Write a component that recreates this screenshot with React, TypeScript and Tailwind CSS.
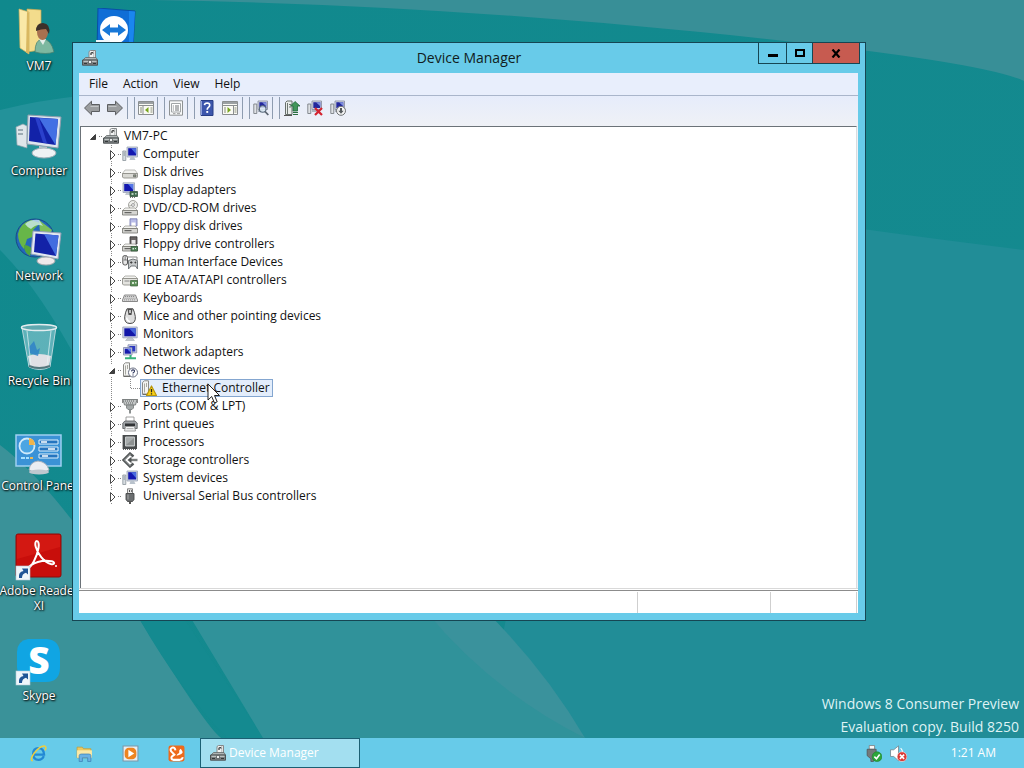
import type { ReactNode } from 'react';

type IconProps = { size?: number };

function Icon({ size = 16, children }: { size?: number; children: ReactNode }) {
  return (
    <svg width={size} height={size} viewBox="0 0 16 16" className="shrink-0" aria-hidden="true">
      {children}
    </svg>
  );
}

/* ---------- device icons ---------- */

function DeviceManagerIcon({ size }: IconProps) {
  return (
    <Icon size={size}>
      <path d="M7 8.500V1.500L8.500.5h5V8.500z" fill="#f1f2f2" stroke="#85898a" />
      <path d="M11.800 1v7" stroke="#b4b8b8" />
      <path d="M9 5V3.200q1.500-1.500 2.200.3" fill="none" stroke="#2e3131" strokeWidth="1.200" />
      <path d="M1 10 3.500 7.500H14l1.500 2.500z" fill="#aeb3b3" stroke="#63696a" strokeWidth=".8" />
      <path d="M.5 10h15v5.200H.5z" fill="#7b8081" stroke="#4d5354" />
      <path d="M1.500 11.300h13" stroke="#cdd1d1" />
      <path d="M2 13.500h3M11 13.500h3" stroke="#34383a" />
      <path d="M6.500 10.500h3v3h-3z" fill="#eceeee" stroke="#4b5051" strokeWidth=".7" />
    </Icon>
  );
}

function ComputerIcon() {
  return (
    <Icon>
      <path d="M.8 5h3v9.500h-3z" fill="#d7dde2" stroke="#8a939b" strokeWidth=".8" />
      <path d="M1.500 7h1.500M1.500 9h1.500" stroke="#5b6b79" strokeWidth=".7" />
      <path d="M5 1h10.500v10H5z" fill="#cfd6e2" stroke="#9aa3b5" strokeWidth=".8" />
      <path d="M6.200 2.200h8v7.300h-8z" fill="#1418b0" />
      <path d="M9 2.200h5.200v6z" fill="#4a6de0" />
      <path d="M8.500 11h3.500l1.500 3h-6z" fill="#b9c2cc" />
    </Icon>
  );
}

function DiskIcon() {
  return (
    <Icon>
      <path d="M3 6h10l2.500 3.500H.5z" fill="#f2f2ef" stroke="#a5a5a0" strokeWidth=".7" />
      <path d="M.5 9.500h15V13l-1 1h-13l-1-1z" fill="#d9d9d4" stroke="#85857f" strokeWidth=".8" />
      <path d="M11.500 10.800h2.500v2h-2.500z" fill="#8f9a86" stroke="#555" strokeWidth=".6" />
    </Icon>
  );
}

function DisplayIcon() {
  return (
    <Icon>
      <path d="M1 .8h11.500v9.700H1z" fill="#cfd6e2" stroke="#9aa3b5" strokeWidth=".8" />
      <path d="M2.200 2h9v7.200h-9z" fill="#1418b0" />
      <path d="M6 2h5.200v6z" fill="#5577e6" />
      <path d="M4 11h5v2H3z" fill="#c1c8d0" />
      <path d="M8 9.500h7.500v5H8z" fill="#3f6b4d" stroke="#2c4735" strokeWidth=".7" />
      <path d="M9.500 11h2v2h-2zM13 11h1.500v1.500H13z" fill="#b8cdbd" />
      <path d="M8 15.500h6" stroke="#777" strokeDasharray="1 1" />
    </Icon>
  );
}

function DriveBase() {
  return (
    <>
      <path d="M3 8h10l2.500 2.500H.5z" fill="#f3f3f0" stroke="#96968f" strokeWidth=".7" />
      <path d="M.5 10.500h15V15H.5z" fill="#d6d6d2" stroke="#75756f" strokeWidth=".8" />
      <path d="M2.500 12.700h7" stroke="#4c4c49" />
    </>
  );
}

function DvdIcon() {
  return (
    <Icon>
      <circle cx="11" cy="5" r="4.500" fill="#eeefec" stroke="#8e8e89" strokeWidth=".8" />
      <path d="m11 5 2.500-4M11 5 7 6" stroke="#b9b9b0" />
      <circle cx="11" cy="5" r="1.400" fill="#fff" stroke="#777" strokeWidth=".7" />
      <DriveBase />
    </Icon>
  );
}

function FloppyIcon() {
  return (
    <Icon>
      <path d="M8 .8h7V8H8z" fill="#b9bde8" stroke="#6f74a8" strokeWidth=".8" />
      <path d="M9.500 4.500h4V8h-4z" fill="#fff" />
      <DriveBase />
    </Icon>
  );
}

function FloppyControllerIcon() {
  return (
    <Icon>
      <path d="M8 .8h7V8H8z" fill="#6a6565" stroke="#333" strokeWidth=".8" />
      <path d="M9.500 4h4v4h-4z" fill="#e9e9e9" />
      <DriveBase />
      <path d="M9 10.500h6.500V15H9z" fill="#4f8257" stroke="#315437" strokeWidth=".7" />
      <path d="M10.500 12h1.500v1.500h-1.500zM13 12h1v1h-1z" fill="#dbe8dc" />
    </Icon>
  );
}

function HidIcon() {
  return (
    <Icon>
      <rect x=".8" y="1.500" width="4.700" height="9.500" rx="2" fill="#e6e6e6" stroke="#555" />
      <path d="M3.200 2v4M1.500 6h3.500" stroke="#666" strokeWidth=".8" />
      <path d="M6 3h9v3" fill="none" stroke="#8b8b8b" />
      <path d="M6.500 6.500Q11 3.500 15.500 6.500v8.500L13.500 12H9L6.500 15z" fill="#c6c9ca" stroke="#686d70" strokeWidth=".9" />
      <path d="M8 8.500h2.500M9.250 7.200v2.600M12.500 8.500h1.800M13.400 7.500v2" stroke="#333" strokeWidth=".8" />
    </Icon>
  );
}

function IdeIcon() {
  return (
    <Icon>
      <path d="M3 4h10l2.500 2.500H.5z" fill="#f3f3f0" stroke="#96968f" strokeWidth=".7" />
      <path d="M.5 6.500h15V12l-1 1h-13l-1-1z" fill="#e3e3df" stroke="#85857f" strokeWidth=".8" />
      <path d="M2.500 9h5" stroke="#888" />
      <path d="M8.500 8.500h7V14h-7z" fill="#5a8f57" stroke="#3c6139" strokeWidth=".7" />
      <path d="M10 10h2v2h-2zM13 10h1.500v1.500H13z" fill="#d7e6d3" />
    </Icon>
  );
}

function KeyboardIcon() {
  return (
    <Icon>
      <path d="M2.500 5h11l2 5v1.500H.5V10z" fill="#dcdcdc" stroke="#7e7e7e" strokeWidth=".9" />
      <path d="M3 6.500h10M2.500 8.200h11M2 9.900h12" stroke="#8d8d8d" strokeDasharray="1.200 .8" />
    </Icon>
  );
}

function MouseIcon() {
  return (
    <Icon>
      <path d="M5 .8h6q1.500 3 2.300 7.700Q14 15.500 8 15.500T2.700 8.500Q3.500 3.800 5 .8z" fill="#dedede" stroke="#4a4a4a" />
      <path d="M5.500.8 6.500 7h3L10.500.8z" fill="#4f4f4f" />
      <path d="M7.300 2h1.400v3H7.300z" fill="#f3f3f3" />
      <path d="M4.500 9.500q1 4 3.500 4" fill="none" stroke="#fff" strokeWidth="1.500" />
    </Icon>
  );
}

function MonitorIcon() {
  return (
    <Icon>
      <path d="M.8 1h14.400v10.800H.8z" fill="#d3d8e6" stroke="#959db5" strokeWidth=".8" />
      <path d="M2.300 2.300h11.400v8H2.300z" fill="#1216a8" />
      <path d="M7 2.300h6.700v7z" fill="#4566db" />
      <path d="M6 11.800h4l2.500 2.700h-9z" fill="#c2c8d0" stroke="#9da5ae" strokeWidth=".5" />
    </Icon>
  );
}

function NetworkAdapterIcon() {
  return (
    <Icon>
      <path d="M6 .8h8.700v8H6z" fill="#d3d8e6" stroke="#7d86a8" strokeWidth=".8" />
      <path d="M7.300 2h6v5.500h-6z" fill="#2b38c0" />
      <path d="M1.500 3.500H10v7.500H1.500z" fill="#d3d8e6" stroke="#7d86a8" strokeWidth=".8" />
      <path d="M2.700 4.700h6.200v5H2.700z" fill="#171bad" />
      <path d="m5 4.700 3.900 4v-4z" fill="#5e7ef0" />
      <path d="M8.500 11v3M3 14.300h11" stroke="#37b27b" strokeWidth="2" fill="none" />
    </Icon>
  );
}

function TowerShape() {
  return (
    <>
      <path d="m1.500 2.500 2-1.700h4V14h-6z" fill="#f4f4f2" stroke="#8a8a86" />
      <path d="M3.500 3.500v9M5.500 3v4" stroke="#a8a8a0" />
      <path d="M1.500 14.500h7" stroke="#6b6b68" />
    </>
  );
}

function OtherDeviceIcon() {
  return (
    <Icon>
      <TowerShape />
      <circle cx="11" cy="10.500" r="4.500" fill="#fff" stroke="#666c80" />
      <path d="M9.500 9.400q.2-1.600 1.600-1.500 1.500.1 1.400 1.300-.1.800-.9 1.200-.6.300-.6 1" fill="none" stroke="#30385f" strokeWidth="1.100" />
      <path d="M10.400 12.400h1.200v1.100h-1.200z" fill="#30385f" />
    </Icon>
  );
}

function WarningDeviceIcon() {
  return (
    <Icon>
      <TowerShape />
      <path d="m10.500 6 5 9.500h-10z" fill="#f8cf16" stroke="#b8960d" strokeWidth="1.200" strokeLinejoin="round" />
      <path d="M10.500 9v3.200M10.500 13.200v1.200" stroke="#222" strokeWidth="1.300" />
    </Icon>
  );
}

function PortIcon() {
  return (
    <Icon>
      <path d="M1 1.500h14L13.500 7h-11z" fill="#c3c6c6" stroke="#7c8181" />
      <path d="M3 3h10M4 5h8" stroke="#5c6060" strokeDasharray="1 1" />
      <path d="M4.500 7h7v3L10 11.500H6L4.500 10z" fill="#a4a9a9" stroke="#747979" strokeWidth=".8" />
      <path d="M7 11.500h2v4H7z" fill="#8b9090" />
      <path d="M.5 1v4M15.500 1v4" stroke="#888" />
    </Icon>
  );
}

function PrinterIcon() {
  return (
    <Icon>
      <path d="M4 1h8v5H4z" fill="#fff" stroke="#8b8b8b" strokeWidth=".8" />
      <path d="M.8 7 3 5h10l2.200 2v5.500H.8z" fill="#a0a4a7" stroke="#55595c" strokeWidth=".8" />
      <path d="M3 7.500h10V10H3z" fill="#303335" />
      <path d="M3.500 10.500h9l1 4.500h-11z" fill="#f3f5f5" stroke="#888" strokeWidth=".8" />
      <path d="M4.500 12.700h7" stroke="#aaa" />
    </Icon>
  );
}

function ProcessorIcon() {
  return (
    <Icon>
      <path d="M1 1h14v14H1z" fill="#484b4c" />
      <path d="M.5 1.500v14M1 15.500h14" stroke="#666" strokeDasharray="1 1" />
      <path d="M3.500 3h9v9h-9z" fill="#a8acac" stroke="#c6caca" />
      <path d="m4 11 8-7v7z" fill="#8e9292" />
    </Icon>
  );
}

function StorageIcon() {
  return (
    <Icon>
      <path d="M11.500 4.500 8 1.500 1.500 8 8 14.500l3.500-3" fill="none" stroke="#55595a" strokeWidth="2.400" />
      <path d="m8.500 2-6 6 6 6" fill="none" stroke="#b4b8b8" strokeWidth=".8" />
      <path d="M8 8h7.500" stroke="#7a7e7e" strokeWidth="2.400" />
      <path d="m5.500 8 4-3.300v6.600z" fill="#4f5353" />
    </Icon>
  );
}

function UsbIcon() {
  return (
    <Icon>
      <path d="M5.500.8h5v4.700h-5z" fill="#e6e6e6" stroke="#777" strokeWidth=".9" />
      <path d="M7 2h1v2H7zM9 2h.8v2H9z" fill="#555" />
      <path d="M4 5.500h8v6L10.500 13.500h-5L4 11.500z" fill="#6b6e70" stroke="#47494a" strokeWidth=".9" />
      <path d="M6 6.500v5" stroke="#aaa" />
      <path d="M8 13.500V16" stroke="#555" strokeWidth="2" />
    </Icon>
  );
}

/* ---------- toolbar icons ---------- */

function ArrowIcon({ flip = false }: { flip?: boolean }) {
  return (
    <Icon>
      <path
        d={flip ? 'M15.500 8 8.500 1.200V4.500H.5v7h8v3.300z' : 'M.5 8 7.500 1.200V4.500h8v7h-8v3.300z'}
        fill="#9b9d9f"
        stroke="#5c5e61"
        strokeLinejoin="round"
      />
      <path d={flip ? 'M1.500 6.500h8' : 'M6.500 6.500h8'} stroke="#c4c6c8" />
    </Icon>
  );
}

function PaneIcon({ right = false }: { right?: boolean }) {
  return (
    <Icon>
      <path d="M.5 1.500h15v13H.5z" fill="#fafaf4" stroke="#8a8e90" />
      <path d="M1 2h14v2H1z" fill="#9ba0a3" />
      <path d="M1 5.500h14" stroke="#8a8e90" />
      <path d={right ? 'M11.500 6v8' : 'M5 6v8'} stroke="#8a8e90" />
      <path d="M2 8h2M2 10h2M2 12h2M12.500 8h2M12.500 10h2M12.500 12h2" stroke="#888d7a" />
      <path d={right ? 'M5.500 7v6L9 10z' : 'M10.500 7v6L7 10z'} fill="#78a51d" />
    </Icon>
  );
}

function PropertiesIcon() {
  return (
    <Icon>
      <path d="M1.500.8h13v14.400h-13z" fill="#f8f9f9" stroke="#8e9293" />
      <path d="M3.500 3.500h9v8.500h-9z" fill="#fff" stroke="#a1a5a6" />
      <path d="M4.800 6h1M7 6h4M4.800 8h1M7 8h4M4.800 10h1M7 10h4" stroke="#6c7172" />
      <path d="M5 13.700h2.500M9 13.700h3" stroke="#999" />
    </Icon>
  );
}

function HelpIcon() {
  return (
    <Icon>
      <path d="M2 .5h12v15H2z" fill="#3c56ac" stroke="#273d85" />
      <path d="M2.500 1v14" stroke="#8ea0db" />
      <path d="M5.500 5.200Q5.700 3 8.200 3q2.600.1 2.500 2.300 0 1.300-1.300 2.100Q8.200 8.200 8.200 9.700" fill="none" stroke="#fff" strokeWidth="1.700" />
      <path d="M7.300 11h1.900v1.900H7.300z" fill="#fff" />
    </Icon>
  );
}

function SmallComputer() {
  return (
    <>
      <path d="M.8 4h3v9.500h-3z" fill="#dfe2e5" stroke="#7b8086" strokeWidth=".9" />
      <path d="M5 1h9.500v8.500H5z" fill="#d5d9e6" stroke="#8d93a5" strokeWidth=".9" />
      <path d="M6.300 2.200h7v5.800h-7z" fill="#23279c" />
      <path d="m9 2.200 4.300 4V2.200z" fill="#7d8ede" />
      <path d="M5 11h5" stroke="#9aa0aa" strokeWidth="1.500" />
    </>
  );
}

function ScanIcon() {
  return (
    <Icon>
      <SmallComputer />
      <circle cx="9.700" cy="9" r="3.300" fill="#dceaf6" fillOpacity=".85" stroke="#596a7b" strokeWidth="1.100" />
      <path d="m12 11.500 3.300 3.500" stroke="#5b6570" strokeWidth="1.800" />
    </Icon>
  );
}

function UpdateDriverIcon() {
  return (
    <Icon>
      <path d="M1.500 2.500 3 1h5v13.500H1.500z" fill="#e9ecea" stroke="#68706b" />
      <path d="M3.500 3v11M5 4.500h2M5 7h2" stroke="#6d7670" />
      <path d="M11 1.500 6.500 6H9v5h4.500V6H16z" fill="#42965a" stroke="#22663a" strokeWidth=".8" />
      <path d="M9 12.500h5M9 14.500h5" stroke="#2a6d40" strokeWidth="1.200" />
      <path d="M0 15.500h8" stroke="#555" />
    </Icon>
  );
}

function UninstallIcon() {
  return (
    <Icon>
      <SmallComputer />
      <path d="m8 8 7 7M15 8l-7 7" stroke="#d3232f" strokeWidth="2.200" />
    </Icon>
  );
}

function DisableIcon() {
  return (
    <Icon>
      <SmallComputer />
      <circle cx="11" cy="10.800" r="4.500" fill="#f4f4f4" stroke="#6d7072" />
      <path d="M10 8h2v2.700h1.700L11 13.700l-2.700-3H10z" fill="#555a5d" />
    </Icon>
  );
}

/* ---------- tree ---------- */

function Connector({ open = false, root = false }: { open?: boolean; root?: boolean }) {
  return (
    <button type="button" aria-label={open ? 'Collapse' : 'Expand'} className="h-[18px] w-[19px] shrink-0">
      <svg width="19" height="18" viewBox="0 0 19 18" aria-hidden="true">
        {!root && <path d="M8.500 0v4M8.500 16v2" stroke="#8a8a8a" strokeDasharray="1 1" />}
        <path d="M15 9.500h3" stroke="#808080" strokeDasharray="1 1" />
        {open ? (
          <path d="M11.500 7.500v5h-5z" fill="#404040" stroke="#262626" strokeWidth=".8" />
        ) : (
          <path d="M7.500 5.500v9l4.500-4.500z" fill="#fff" stroke="#4a4a4a" />
        )}
      </svg>
    </button>
  );
}

const categories: { label: string; icon: ReactNode; child?: string }[] = [
  { label: 'Computer', icon: <ComputerIcon /> },
  { label: 'Disk drives', icon: <DiskIcon /> },
  { label: 'Display adapters', icon: <DisplayIcon /> },
  { label: 'DVD/CD-ROM drives', icon: <DvdIcon /> },
  { label: 'Floppy disk drives', icon: <FloppyIcon /> },
  { label: 'Floppy drive controllers', icon: <FloppyControllerIcon /> },
  { label: 'Human Interface Devices', icon: <HidIcon /> },
  { label: 'IDE ATA/ATAPI controllers', icon: <IdeIcon /> },
  { label: 'Keyboards', icon: <KeyboardIcon /> },
  { label: 'Mice and other pointing devices', icon: <MouseIcon /> },
  { label: 'Monitors', icon: <MonitorIcon /> },
  { label: 'Network adapters', icon: <NetworkAdapterIcon /> },
  { label: 'Other devices', icon: <OtherDeviceIcon />, child: 'Ethernet Controller' },
  { label: 'Ports (COM & LPT)', icon: <PortIcon /> },
  { label: 'Print queues', icon: <PrinterIcon /> },
  { label: 'Processors', icon: <ProcessorIcon /> },
  { label: 'Storage controllers', icon: <StorageIcon /> },
  { label: 'System devices', icon: <ComputerIcon /> },
  { label: 'Universal Serial Bus controllers', icon: <UsbIcon /> },
];

function DeviceTree() {
  return (
    <ul className="pl-[3px] text-[12px] leading-[18px] text-[#111]">
      <li>
        <div className="flex h-[18px] items-center">
          <Connector open root />
          <DeviceManagerIcon />
          <span className="pl-[5px]">VM7-PC</span>
        </div>
        <ul className="pl-[19px]">
          {categories.map((c) => (
            <li key={c.label}>
              <div className="flex h-[18px] items-center">
                <Connector open={Boolean(c.child)} />
                {c.icon}
                <span className="whitespace-nowrap pl-[5px]">{c.label}</span>
              </div>
              {c.child && (
                <div className="flex h-[18px] items-center">
                  <svg width="37" height="18" viewBox="0 0 37 18" className="shrink-0" aria-hidden="true">
                    <path d="M8.500 0v18M27.500 0v9.500H37" fill="none" stroke="#8a8a8a" strokeDasharray="1 1" />
                  </svg>
                  <div className="relative flex h-[18px] items-center border border-[#84a6d0] bg-[#e3edfb] pr-[2px]">
                    <WarningDeviceIcon />
                    <span className="whitespace-nowrap pl-[5px]">{c.child}</span>
                    {/* mouse pointer */}
                    <svg width="14" height="22" viewBox="0 0 14 22" className="absolute left-[66px] top-[3px]" aria-hidden="true">
                      <path d="M1 1v16l3.700-3.500 2.800 6.500 2.700-1.200-2.700-6.300h5z" fill="#fff" stroke="#222" />
                    </svg>
                  </div>
                </div>
              )}
            </li>
          ))}
        </ul>
      </li>
    </ul>
  );
}

/* ---------- window ---------- */

function ToolButton({ label, children }: { label: string; children: ReactNode }) {
  return (
    <button type="button" aria-label={label} className="flex h-[22px] items-center">
      {children}
    </button>
  );
}

function DeviceManagerWindow() {
  return (
    <section className="absolute bottom-[117px] left-[72px] right-[158px] top-[42px] flex flex-col border border-[#164653] bg-[#68cbe9] pb-[7px] pl-[6px] pr-[7px]">
      <header className="-mr-[2px] flex h-[30px] shrink-0 items-start">
        <div className="w-[101px] pl-[3px] pt-[7px]">
          <DeviceManagerIcon />
        </div>
        <h1 className="flex-1 text-center text-[14px] leading-[30px] text-[#101c20]">Device Manager</h1>
        <div className="flex h-[21px] divide-x divide-[#164653] border-x border-b border-[#164653]">
          <button type="button" aria-label="Minimize" className="flex w-[28px] items-center justify-center">
            <span className="mt-1 h-[3px] w-[10px] bg-black" />
          </button>
          <button type="button" aria-label="Maximize" className="flex w-[26px] items-center justify-center">
            <span className="h-[8px] w-[10px] border-2 border-black" />
          </button>
          <button type="button" aria-label="Close" className="flex w-[46px] items-center justify-center bg-[#c75b50]">
            <svg width="10" height="9" viewBox="0 0 10 9" aria-hidden="true">
              <path d="m1.500.5 7 8M8.500.5l-7 8" stroke="#000" strokeWidth="2.200" />
            </svg>
          </button>
        </div>
      </header>

      <div className="flex min-h-0 flex-1 flex-col bg-[#eff1f6]">
        <nav className="flex h-[23px] shrink-0 items-center gap-[15px] border-b border-[#a9b5cb] bg-[#e8eefc] pl-[10px] text-[12px] text-[#111]">
          <button type="button">File</button>
          <button type="button">Action</button>
          <button type="button">View</button>
          <button type="button">Help</button>
        </nav>

        <div className="flex h-[30px] shrink-0 items-start gap-[6px] bg-linear-to-b from-[#e6ecfb] to-[#eff1f6] pl-[5px] pt-px">
          <div className="flex gap-[7px] border-r border-[#8e9cb0] pr-1">
            <ToolButton label="Back"><ArrowIcon /></ToolButton>
            <ToolButton label="Forward"><ArrowIcon flip /></ToolButton>
          </div>
          <div className="flex border-x border-[#8e9cb0] px-[3px]">
            <ToolButton label="Show/Hide Console Tree"><PaneIcon /></ToolButton>
          </div>
          <div className="flex border-x border-[#8e9cb0] px-[3px]">
            <ToolButton label="Properties"><PropertiesIcon /></ToolButton>
          </div>
          <div className="flex gap-[7px] border-x border-[#8e9cb0] px-1">
            <ToolButton label="Help"><HelpIcon /></ToolButton>
            <ToolButton label="Show/Hide Action Pane"><PaneIcon right /></ToolButton>
          </div>
          <div className="flex border-x border-[#8e9cb0] px-[3px]">
            <ToolButton label="Scan for hardware changes"><ScanIcon /></ToolButton>
          </div>
          <div className="flex gap-[7px] border-l border-[#8e9cb0] pl-1">
            <ToolButton label="Update Driver Software"><UpdateDriverIcon /></ToolButton>
            <ToolButton label="Uninstall"><UninstallIcon /></ToolButton>
            <ToolButton label="Disable"><DisableIcon /></ToolButton>
          </div>
        </div>

        <main className="mx-px min-h-0 flex-1 border-x border-t border-[#6b7278] border-r-[#d9dde0] bg-white">
          <DeviceTree />
        </main>

        <footer className="flex h-[25px] shrink-0 flex-col border-t border-[#d9d9d9] bg-white">
          <div className="mt-px border-t border-[#8c8c8c]" />
          <div className="flex flex-1 pr-px pt-px">
            <div className="flex-1 border-r border-[#cfcfcf]" />
            <div className="w-[133px] border-r border-[#cfcfcf]" />
            <div className="w-[86px] border-r border-[#cfcfcf]" />
          </div>
        </footer>
      </div>
    </section>
  );
}

/* ---------- desktop ---------- */

function Shortcut() {
  return (
    <>
      <rect x="1" y="33" width="14" height="14" fill="#eef6fb" stroke="#b5cbd8" strokeWidth=".6" />
      <path d="M4 45q-1-6 4.500-7L7 35.500h6v6l-2-1.800q-4 1-4 5.300z" fill="#1f5596" />
    </>
  );
}

function UserFolderArt() {
  return (
    <>
      <path d="M12 1 26 2v40l-14 2z" fill="#f3dc8c" stroke="#c9a84f" strokeWidth=".7" />
      <path d="m4 1 10 3v42L5 40z" fill="#fae9a8" stroke="#cfb05c" strokeWidth=".7" />
      <path d="m12 4 2 .5V46l-3-1.500z" fill="#d9b861" />
      <path d="M20 44q0-12 7-13 9 0 12 13-8 3-19 0z" fill="#7db8a0" stroke="#477e6b" strokeWidth=".7" />
      <path d="m24 31 4 6 3-6z" fill="#e5eee9" />
      <ellipse cx="27.500" cy="24" rx="5.500" ry="8" fill="#a9714f" />
      <path d="M21 23q0-8 7-8 8 1 6 11l-3-5q-5 0-10 2z" fill="#3c3029" />
    </>
  );
}

function ComputerArt() {
  return (
    <>
      <path d="m1 14 7-3 4 2v22l-10-3z" fill="#dfe6ea" stroke="#8ea0ab" strokeWidth=".7" />
      <path d="M3 17h5M3 21h5" stroke="#5a707d" />
      <path d="m13 2 33 2-3 31-31-4z" fill="#dde5ee" stroke="#8c9dad" />
      <path d="m15 4 28 2-2.500 26L14 28z" fill="#1222a8" />
      <path d="m24 5 19 1-2.500 26z" fill="#4370e4" />
      <path d="m20 4.500 8 25 4 .8L24 5z" fill="#2a40cc" />
      <path d="m24 33 8 1 1 5h-9z" fill="#bcc7cf" />
      <ellipse cx="29" cy="40" rx="12" ry="5" fill="#eef2f4" stroke="#9fadb6" />
    </>
  );
}

function NetworkArt() {
  return (
    <>
      <circle cx="20" cy="20" r="19" fill="#2468bb" stroke="#174a86" />
      <path d="M3 16Q5 5 16 2l9 3-7 7 2 6-8 3-3 10q-6-6-6-15z" fill="#67b648" />
      <path d="m24 2 13 10-4 8-8-5z" fill="#7dbf5b" />
      <path d="M9 27q5 0 8 4l-2 7q-6-3-6-11z" fill="#52a53d" />
      <path d="M10 6q6-5 14-4l4 6q-6-3-12 3-4-2-6-5z" fill="#d4eef7" opacity=".75" />
      <path d="m18 13 28 2-3 26-27-5z" fill="#e2e8f1" stroke="#93a0b6" />
      <path d="m20.500 15.500 23 2-2.500 20.500-22-4z" fill="#1322a7" />
      <path d="m29 16 14.500 1.500L41 38z" fill="#426ce0" />
      <ellipse cx="31" cy="43" rx="9" ry="4" fill="#f0e9ea" stroke="#a8a9ad" />
    </>
  );
}

function RecycleBinArt() {
  return (
    <>
      <path d="m7 5 34-1-6 40q-10 5-21 0z" fill="#a9d9e3" fillOpacity=".5" stroke="#b5d5db" />
      <path d="M13 33q10-4 23 0l-2 10q-9 4-19 0z" fill="#eee6ea" fillOpacity=".9" />
      <path d="m14 24 5-6 3 9 3-2-2 8-9-3z" fill="#2c7fc8" opacity=".8" />
      <path d="m36 8-4 34" stroke="#e8f7f8" opacity=".7" />
      <path d="m12 8 4 34" stroke="#e8f7f8" opacity=".7" />
      <ellipse cx="24" cy="4.500" rx="17.500" ry="3" fill="#5fa8af" stroke="#e3edef" strokeWidth="1.500" />
      <path d="M14 43q10 4 21 0" fill="none" stroke="#55767c" strokeWidth="2" />
    </>
  );
}

function ControlPanelArt() {
  return (
    <g transform="translate(0 6)">
      <rect x="1" y="1" width="45" height="31" fill="#3b92d6" stroke="#9fd0f1" strokeWidth="1.500" />
      <circle cx="12" cy="12" r="7.500" fill="#4ba5e2" stroke="#cfeafa" strokeWidth="1.800" />
      <path d="M14 11V4q6 1 6 7z" fill="#f0b44a" />
      <path d="M24 6h19v4H24zM24 13h19v4H24zM24 20h19v4H24z" fill="#2575bf" stroke="#dff2fd" />
      <path d="M26 8h6M33 15h7M27 22h6" stroke="#fff" strokeWidth="1.500" />
      <path d="M6 24h4M11 24h3" stroke="#a6e0ff" strokeWidth="2" />
      <path d="M15 24h3" stroke="#efb953" strokeWidth="2" />
      <path d="M14 36q1-8 9-9 9 1 11 9-10 6-20 0z" fill="#eaedf2" stroke="#aab2bd" />
      <ellipse cx="24" cy="38" rx="10" ry="2.500" fill="#bfc7cf" />
    </g>
  );
}

function AdobeArt() {
  return (
    <>
      <rect x="1" y="1" width="45" height="43" rx="2" fill="#c80e0b" stroke="#8f0a08" />
      <path d="M2 2h43v12Q24 20 2 26z" fill="#dd2119" opacity=".5" />
      <path
        d="M11 37c6-3 11-13 12.500-22 .8-4-.2-7-1.700-7s-2 3-1 6c2 7 8 15 15 17 4 1 4.500-2 1-2.700C28 26.500 17 29 11 37z"
        fill="none"
        stroke="#fff"
        strokeWidth="2"
      />
      <circle cx="41" cy="33" r="1" fill="#fff" />
      <Shortcut />
    </>
  );
}

function SkypeArt() {
  return (
    <>
      <path d="M13 1h19q12 1 13 14v14q0 15-14 15H16Q3 43 2 29V14Q2 3 13 1z" fill="#10a5e3" />
      <text x="24" y="36" textAnchor="middle" fontSize="37" fontWeight="800" fill="#fff">
        S
      </text>
      <Shortcut />
    </>
  );
}

const shortcuts: { label: string; art: ReactNode }[] = [
  { label: 'VM7', art: <UserFolderArt /> },
  { label: 'Computer', art: <ComputerArt /> },
  { label: 'Network', art: <NetworkArt /> },
  { label: 'Recycle Bin', art: <RecycleBinArt /> },
  { label: 'Control Panel', art: <ControlPanelArt /> },
  { label: 'Adobe Reader\nXI', art: <AdobeArt /> },
  { label: 'Skype', art: <SkypeArt /> },
];

function DesktopIcons() {
  return (
    <div className="flex">
      <ul className="w-[78px] pt-2">
        {shortcuts.map((s) => (
          <li key={s.label} className="h-[105px]">
            <button type="button" className="flex w-full flex-col items-center">
              <svg width="48" height="48" viewBox="0 0 48 48" aria-hidden="true">
                {s.art}
              </svg>
              <span className="mt-[2px] whitespace-pre text-center text-[12px] leading-[15px] text-white [text-shadow:1px_1px_2px_#000,0_0_2px_#000]">
                {s.label}
              </span>
            </button>
          </li>
        ))}
      </ul>
      <button type="button" aria-label="TeamViewer" className="ml-[18px] mt-2 h-[48px]">
        <svg width="40" height="48" viewBox="0 0 40 48" aria-hidden="true">
          <path d="m2 0 37 3-2 37H1z" fill="#0f6ed6" stroke="#0a4fa6" />
          <path d="m33 3 6 .5L37 40l-4-1z" fill="#1a86ef" />
          <circle cx="18" cy="22" r="14" fill="#fff" />
          <path d="m6 22 8-6v3.500h8V16l8 6-8 6v-3.500h-8V28z" fill="#1878d8" />
          <path d="M0 32h14v8H0z" fill="#eef6fb" />
        </svg>
      </button>
    </div>
  );
}

function Wallpaper() {
  return (
    <svg className="absolute inset-0 h-full w-full" viewBox="0 0 1024 738" preserveAspectRatio="none" aria-hidden="true">
      <defs>
        <linearGradient id="base" x1="0" y1="0" x2="1" y2="1">
          <stop offset="0" stopColor="#10898d" />
          <stop offset="1" stopColor="#168a90" />
        </linearGradient>
      </defs>
      <path d="M0 0h1024v738H0z" fill="url(#base)" />
      <path d="M150 0Q420 4 700 32T1024 81V0z" fill="#388f97" />
      <path d="M600 190Q820 225 1024 250v488H480z" fill="#218d97" />
      <path d="M0 110Q40 100 80 96v270Q40 290 0 250z" fill="#23929a" />
      <path d="M0 445Q60 490 140 620t85 118H0z" fill="#3a9299" />
      <path d="M140 620h45q40 60 78 118h-36Q180 690 140 620z" fill="#148a90" />
      <path d="M180 600h250q60 80 155 138H263z" fill="#30929a" />
      <path d="M425 610h60q60 60 100 128Q490 690 425 610z" fill="#3a929c" />
    </svg>
  );
}

/* ---------- taskbar ---------- */

function Taskbar() {
  return (
    <footer className="flex h-[30px] shrink-0 items-stretch bg-[#67cbe9] pl-[15px]">
      <button type="button" aria-label="Internet Explorer" className="flex w-[46px] items-center justify-center">
        <Icon size={17}>
          <path d="M13 10.500q-1.500 3.500-5 3.500-5 0-5-5.500T8 3q5 0 5.200 6H4" fill="none" stroke="#2389d4" strokeWidth="2.200" />
          <path d="M2.500 15Q-.5 14 4 7.500 10 0 14 1q2 1 0 4" fill="none" stroke="#f0ce3d" strokeWidth="1.400" />
        </Icon>
      </button>
      <button type="button" aria-label="File Explorer" className="flex w-[46px] items-center justify-center">
        <Icon size={17}>
          <path d="M1 2h5l1 1.500h7V12H1z" fill="#eec95f" stroke="#c49b36" strokeWidth=".7" />
          <path d="M1 5h14v7H1z" fill="#fbe9a6" />
          <path d="M3 15.500V10q0-1.500 2-1.500h7q2 0 2 1.500v5.500h-3V12H6v3.500z" fill="#6bb2e4" stroke="#3d80b5" strokeWidth=".7" />
        </Icon>
      </button>
      <button type="button" aria-label="Windows Media Player" className="flex w-[46px] items-center justify-center">
        <Icon size={17}>
          <path d="M1 1h14v14H1z" fill="#e8eef2" stroke="#7e98a8" />
          <rect x="2.500" y="2.500" width="11" height="11" rx="4" fill="#ee8420" />
          <path d="M6 4.500v7L11.500 8z" fill="#fff" />
        </Icon>
      </button>
      <button type="button" aria-label="UC Browser" className="flex w-[46px] items-center justify-center">
        <Icon size={17}>
          <rect x=".5" y=".5" width="15" height="15" rx="2" fill="#ee6a1b" />
          <path d="M7 5Q6.500 2 4 2.500 1.500 3.500 3 6q1.500 1.500 3 3l-2.500 2q-1 2.500 1.500 3h6q2.500-.5 3-2.500" fill="none" stroke="#fff" strokeWidth="1.900" />
          <path d="M8 10q.5-2 2.500-2.500Q10 4.500 12 3.500l1.500 2.300q1 1.700-1 2.700T8 10z" fill="#fff" />
        </Icon>
      </button>
      <button
        type="button"
        className="ml-px flex w-[160px] items-center gap-[3px] border border-[#1c5f73] bg-[#a3dff0] pl-[9px] text-[12px] text-white"
      >
        <DeviceManagerIcon />
        Device Manager
      </button>

      <div className="ml-auto flex items-center gap-2 pr-[28px]">
        <Icon size={17}>
          <path d="M4 .5h5V4H4z" fill="#fafafa" stroke="#777" strokeWidth=".7" />
          <path d="M2 4h8.500v6L8 13v2.500H5.500V13L2 10z" fill="#75797b" stroke="#505355" strokeWidth=".7" />
          <circle cx="11.300" cy="11" r="4.600" fill="#2da63b" stroke="#1c7a2a" strokeWidth=".5" />
          <path d="m8.800 11 2 2 3-4" fill="none" stroke="#fff" strokeWidth="1.500" />
        </Icon>
        <Icon size={17}>
          <path d="M.5 4.500h3L8 .8v14l-4.500-4h-3z" fill="#fff" stroke="#6f7d85" strokeWidth=".7" />
          <path d="M10 3q3 3 1 7" fill="none" stroke="#fff" />
          <circle cx="11.300" cy="11" r="4.600" fill="#d93a35" stroke="#fff" strokeWidth=".5" />
          <path d="m9.300 9 4 4M13.300 9l-4 4" stroke="#fff" strokeWidth="1.500" />
        </Icon>
        <time className="ml-[36px] text-[12px] text-white">1:21 AM</time>
      </div>
    </footer>
  );
}

export default function App() {
  return (
    <div className="flex h-screen flex-col overflow-hidden font-['Open_Sans','Noto_Sans',sans-serif]">
      <div className="relative min-h-0 flex-1 overflow-hidden">
        <Wallpaper />
        <div className="relative">
          <DesktopIcons />
        </div>
        <p className="absolute bottom-0 right-[5px] text-right text-[14px] leading-[23px] text-[#dff3f5]">
          Windows 8 Consumer Preview
          <br />
          Evaluation copy. Build 8250
        </p>
        <DeviceManagerWindow />
      </div>
      <Taskbar />
    </div>
  );
}
